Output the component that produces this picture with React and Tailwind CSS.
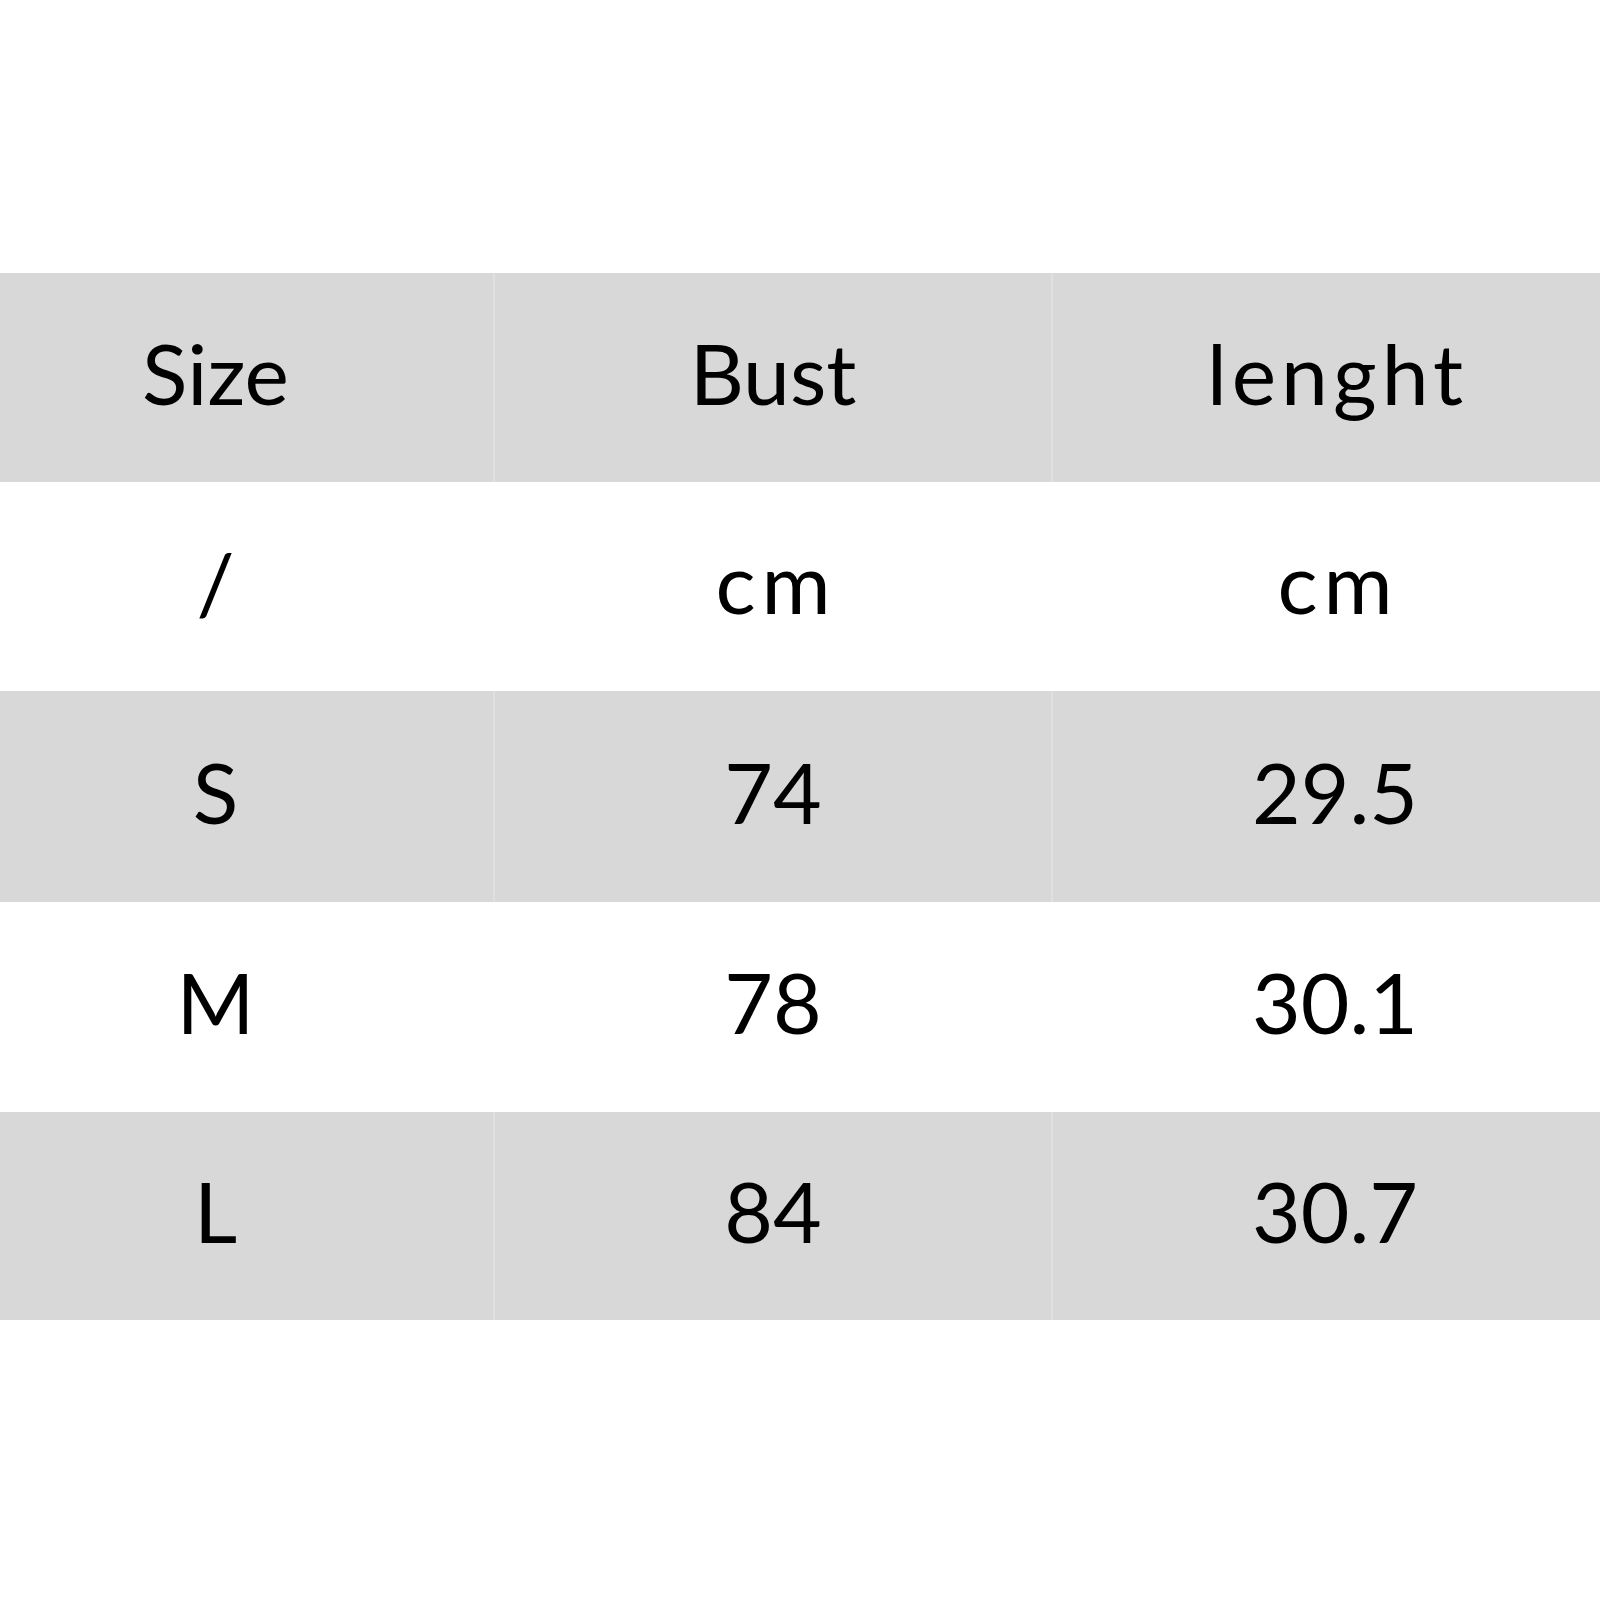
import React from "react";

const rows = [
  { cells: ["Size", "Bust", "lenght"], grey: true, h: "h-[209px]" },
  { cells: ["/", "cm", "cm"], grey: false, h: "h-[209px]" },
  { cells: ["S", "74", "29.5"], grey: true, h: "h-[211px]" },
  { cells: ["M", "78", "30.1"], grey: false, h: "h-[210px]" },
  { cells: ["L", "84", "30.7"], grey: true, h: "h-[208px]" },
];

export default function App() {
  return (
    <div
      className="w-[1600px] h-[1600px] bg-white pt-[273px] text-black"
      style={{ fontFamily: "Lato, 'Liberation Sans', sans-serif" }}
    >
      {rows.map((r, i) => (
        <div
          key={i}
          className={`grid grid-cols-[493px_558px_549px] ${r.h} ${r.grey ? "bg-[#d8d8d8]" : "bg-white"}`}
        >
          <div className="flex items-center justify-center pr-[62px] pb-[10px] text-[84px] leading-none">
            {r.cells[0]}
          </div>
          <div
            className={`flex items-center justify-center pb-[10px] text-[84px] leading-none border-l-2 ${r.grey ? "border-[#e0e0e0]" : "border-white"}`}
          >
            <span className={i === 1 ? "tracking-[6px] pl-[6px]" : ""}>{r.cells[1]}</span>
          </div>
          <div
            className={`flex items-center justify-center pl-[17px] pb-[10px] text-[84px] leading-none border-l-2 ${r.grey ? "border-[#e0e0e0]" : "border-white"}`}
          >
            <span className={i === 0 ? "tracking-[5px] pl-[5px]" : i === 1 ? "tracking-[6px] pl-[6px]" : ""}>
              {r.cells[2]}
            </span>
          </div>
        </div>
      ))}
    </div>
  );
}
